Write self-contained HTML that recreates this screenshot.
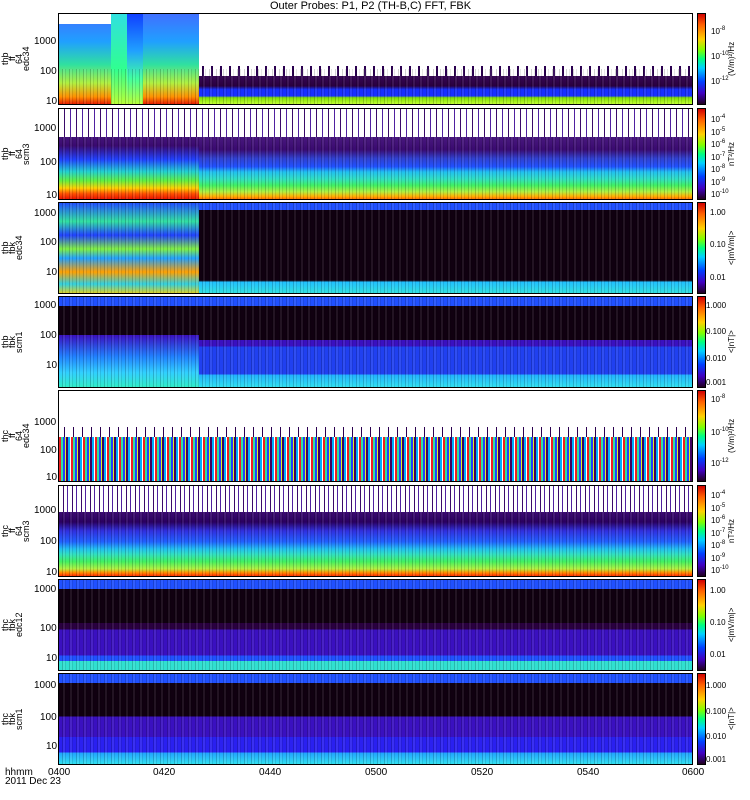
<!DOCTYPE html>
<html><head><style>
body{margin:0;width:750px;height:800px;background:#fff;position:relative;overflow:hidden;font-family:"Liberation Sans",sans-serif;}
.a{position:absolute}
.p{position:absolute;left:58px;width:635px;border:1px solid #000;box-sizing:border-box;overflow:hidden}
.cb{position:absolute;left:697px;width:9px;border:1px solid #000;box-sizing:border-box;background:linear-gradient(to bottom,#d00000,#ff6000 12%,#ffd000 28%,#80ff00 40%,#00ff80 50%,#00d0ff 60%,#0040ff 75%,#4000c0 88%,#200020)}
.t{position:absolute;font-size:10px;color:#000;line-height:10px;white-space:nowrap}
.c{position:absolute;font-size:8px;color:#000;line-height:8px;white-space:nowrap}
.c sup{font-size:6px;vertical-align:4px;line-height:0}
.yl{position:absolute;left:2px;width:26px;font-size:9px;line-height:7px;writing-mode:vertical-rl;transform:rotate(180deg);text-align:center;height:92px}
.u{position:absolute;left:727px;width:12px;font-size:8px;line-height:10px;writing-mode:vertical-rl;transform:rotate(180deg);text-align:center;height:92px;white-space:nowrap}
.st{position:absolute;left:0;right:0;bottom:0;background:repeating-linear-gradient(to right,rgba(0,0,0,0) 0 3px,rgba(0,0,0,.18) 3px 4px,rgba(255,255,255,.08) 4px 6px,rgba(0,0,0,.1) 6px 7px)}
</style></head><body>
<div class="t" style="left:270px;top:1px;font-size:11px">Outer Probes: P1, P2 (TH-B,C) FFT, FBK</div>

<!-- P1 -->
<div class="p" style="top:13px;height:92px;background:linear-gradient(to bottom,#fff 0 58%,#3a0a5a 66%,#2a0040 80%,#1830ff 84%,#1830ff 91%,#80e000 93%,#c0ff30 100%)">
<div class="a" style="left:0;top:0;width:140px;height:92px;background:linear-gradient(to bottom,#4070ff,#20a0ff 30%,#30e0a0 55%,#b0f040 75%,#ff9000 90%,#e00000)"></div>
<div class="a" style="left:52px;top:0;width:16px;height:92px;background:linear-gradient(to bottom,#30e0e0,#30ff90 60%,#c0ff30)"></div>
<div class="a" style="left:68px;top:0;width:16px;height:92px;background:linear-gradient(to bottom,#1040ff,#20a0ff 40%,#40ffa0 70%,#c0ff30)"></div>
<div class="a" style="left:0;top:0;width:52px;height:10px;background:#fff"></div>
<div class="a" style="left:140px;top:52px;width:494px;height:10px;background:repeating-linear-gradient(to right,#fff 0 3px,#2a0050 3px 5px,#fff 5px 9px)"></div>
<div class="st" style="top:55px"></div>
</div>
<div class="cb" style="top:13px;height:92px"></div>

<!-- P2 -->
<div class="p" style="top:108px;height:92px;background:linear-gradient(to bottom,#fff 0,#f0e8f8 20%,#4a1a80 30%,#3a0a70 45%,#3040d0 55%,#2050ff 64%,#20c0f0 70%,#30e0c0 78%,#40f060 85%,#b0f040 92%,#ffb000 97%,#ff7000)">
<div class="a" style="left:0;top:0;width:140px;height:92px;background:linear-gradient(to bottom,#fff 0,#4a1a80 25%,#3a0a70 40%,#2040ff 55%,#20d0d0 68%,#60f040 78%,#ffd000 86%,#ff5000 92%,#e00000)"></div>
<div class="a" style="left:0;top:0;width:634px;height:28px;background:repeating-linear-gradient(to right,#fff 0 5px,#3a0a6a 5px 6px,#fff 6px 11px,#5020a0 11px 12px)"></div>
<div class="st" style="top:28px"></div>
</div>
<div class="cb" style="top:108px;height:92px"></div>

<!-- P3 -->
<div class="p" style="top:202px;height:92px;background:linear-gradient(to bottom,#2050ff 0 8%,#100010 8%,#100010 86%,#20c0ff 88%,#30e0e0)">
<div class="a" style="left:0;top:0;width:140px;height:92px;background:linear-gradient(to bottom,#2050ff,#30e0a0 20%,#2040ff 35%,#80f040 50%,#20a0ff 60%,#ffa000 75%,#30d0e0 88%,#ffd000)"></div>
<div class="st" style="top:0"></div>
</div>
<div class="cb" style="top:202px;height:92px"></div>

<!-- P4 -->
<div class="p" style="top:296px;height:92px;background:linear-gradient(to bottom,#2050ff 0 10%,#100010 10% 48%,#3a10c0 48% 55%,#2040f0 55% 86%,#20b0ff 86%,#30e0f0)">
<div class="a" style="left:0;top:38px;width:140px;height:54px;background:linear-gradient(to bottom,#3a10c0,#2080ff 40%,#30d0ff 70%,#30f0c0)"></div>
<div class="st" style="top:0"></div>
</div>
<div class="cb" style="top:296px;height:92px"></div>

<!-- P5 -->
<div class="p" style="top:390px;height:92px;background:#fff">
<div class="a" style="left:0;top:44px;width:634px;height:48px;background:repeating-linear-gradient(to right,#f02020 0 2px,#30e0a0 2px 4px,#2040ff 4px 6px,#e0f020 6px 7px,#400060 7px 9px,#00b0ff 9px 11px,#fff 11px 12px)"></div>
<div class="a" style="left:0;top:36px;width:634px;height:10px;background:repeating-linear-gradient(to right,#fff 0 5px,#2a0050 5px 6px,#fff 6px 9px)"></div>
</div>
<div class="cb" style="top:390px;height:92px"></div>

<!-- P6 -->
<div class="p" style="top:485px;height:92px;background:linear-gradient(to bottom,#fff 0,#5030a0 20%,#3a0a70 30%,#2a0060 40%,#3030e0 50%,#2060ff 62%,#20c0f0 70%,#30e0c0 76%,#40f060 84%,#b0f040 92%,#ff9000 96%,#ff3000)">
<div class="a" style="left:0;top:0;width:634px;height:26px;background:repeating-linear-gradient(to right,#fff 0 4px,#3a0a6a 4px 5px,#fff 5px 8px,#5020a0 8px 9px)"></div>
<div class="st" style="top:26px"></div>
</div>
<div class="cb" style="top:485px;height:92px"></div>

<!-- P7 -->
<div class="p" style="top:579px;height:92px;background:linear-gradient(to bottom,#2050ff 0 10%,#100010 10% 48%,#2a0040 48% 55%,#3a10c0 55% 84%,#2050ff 84% 90%,#30e0d0 90%)">
<div class="st" style="top:0"></div>
</div>
<div class="cb" style="top:579px;height:92px"></div>

<!-- P8 -->
<div class="p" style="top:673px;height:92px;background:linear-gradient(to bottom,#2050ff 0 10%,#100010 10% 47%,#3a10c0 47% 70%,#2a20f0 70% 87%,#20a0ff 87%,#30e0f0)">
<div class="st" style="top:0"></div>
</div>
<div class="cb" style="top:673px;height:92px"></div>

<!-- y labels -->
<div class="yl" style="top:13px">thb<br>ff<br>64<br>edc34</div>
<div class="yl" style="top:108px">thb<br>ff<br>64<br>scm3</div>
<div class="yl" style="top:202px">thb<br>fbk<br>edc34</div>
<div class="yl" style="top:296px">thb<br>fbk<br>scm1</div>
<div class="yl" style="top:390px">thc<br>ff<br>64<br>edc34</div>
<div class="yl" style="top:485px">thc<br>ff<br>64<br>scm3</div>
<div class="yl" style="top:579px">thc<br>fbk<br>edc12</div>
<div class="yl" style="top:673px">thc<br>fbk<br>scm1</div>

<!-- y ticks -->
<div class="t" style="left:34px;top:37px">1000</div><div class="t" style="left:40px;top:67px">100</div><div class="t" style="left:46px;top:97px">10</div>
<div class="t" style="left:34px;top:124px">1000</div><div class="t" style="left:40px;top:158px">100</div><div class="t" style="left:46px;top:191px">10</div>
<div class="t" style="left:34px;top:209px">1000</div><div class="t" style="left:40px;top:238px">100</div><div class="t" style="left:46px;top:268px">10</div>
<div class="t" style="left:34px;top:301px">1000</div><div class="t" style="left:40px;top:331px">100</div><div class="t" style="left:46px;top:361px">10</div>
<div class="t" style="left:34px;top:418px">1000</div><div class="t" style="left:40px;top:446px">100</div><div class="t" style="left:46px;top:473px">10</div>
<div class="t" style="left:34px;top:506px">1000</div><div class="t" style="left:40px;top:537px">100</div><div class="t" style="left:46px;top:568px">10</div>
<div class="t" style="left:34px;top:585px">1000</div><div class="t" style="left:40px;top:624px">100</div><div class="t" style="left:46px;top:654px">10</div>
<div class="t" style="left:34px;top:681px">1000</div><div class="t" style="left:40px;top:713px">100</div><div class="t" style="left:46px;top:742px">10</div>

<!-- colorbar labels -->
<div class="c" style="left:711px;top:28px">10<sup>-8</sup></div>
<div class="c" style="left:711px;top:53px">10<sup>-10</sup></div>
<div class="c" style="left:711px;top:78px">10<sup>-12</sup></div>
<div class="c" style="left:711px;top:114px;line-height:12.5px">10<sup>-4</sup><br>10<sup>-5</sup><br>10<sup>-6</sup><br>10<sup>-7</sup><br>10<sup>-8</sup><br>10<sup>-9</sup><br>10<sup>-10</sup></div>
<div class="c" style="left:710px;top:209px">1.00</div><div class="c" style="left:710px;top:241px">0.10</div><div class="c" style="left:710px;top:274px">0.01</div>
<div class="c" style="left:706px;top:302px">1.000</div><div class="c" style="left:706px;top:328px">0.100</div><div class="c" style="left:706px;top:355px">0.010</div><div class="c" style="left:706px;top:379px">0.001</div>
<div class="c" style="left:711px;top:396px">10<sup>-8</sup></div>
<div class="c" style="left:711px;top:429px">10<sup>-10</sup></div>
<div class="c" style="left:711px;top:460px">10<sup>-12</sup></div>
<div class="c" style="left:711px;top:490px;line-height:12.5px">10<sup>-4</sup><br>10<sup>-5</sup><br>10<sup>-6</sup><br>10<sup>-7</sup><br>10<sup>-8</sup><br>10<sup>-9</sup><br>10<sup>-10</sup></div>
<div class="c" style="left:710px;top:587px">1.00</div><div class="c" style="left:710px;top:619px">0.10</div><div class="c" style="left:710px;top:651px">0.01</div>
<div class="c" style="left:706px;top:682px">1.000</div><div class="c" style="left:706px;top:708px">0.100</div><div class="c" style="left:706px;top:733px">0.010</div><div class="c" style="left:706px;top:756px">0.001</div>

<!-- units -->
<div class="u" style="top:13px">(V/m)²/Hz</div>
<div class="u" style="top:108px">nT²/Hz</div>
<div class="u" style="top:202px">&lt;|mV/m|&gt;</div>
<div class="u" style="top:296px">&lt;|nT|&gt;</div>
<div class="u" style="top:390px">(V/m)²/Hz</div>
<div class="u" style="top:485px">nT²/Hz</div>
<div class="u" style="top:579px">&lt;|mV/m|&gt;</div>
<div class="u" style="top:673px">&lt;|nT|&gt;</div>

<!-- time axis -->
<div class="t" style="left:5px;top:768px">hhmm</div>
<div class="t" style="left:5px;top:777px">2011 Dec 23</div>
<div class="t" style="left:48px;top:768px">0400</div>
<div class="t" style="left:153px;top:768px">0420</div>
<div class="t" style="left:259px;top:768px">0440</div>
<div class="t" style="left:365px;top:768px">0500</div>
<div class="t" style="left:471px;top:768px">0520</div>
<div class="t" style="left:577px;top:768px">0540</div>
<div class="t" style="left:682px;top:768px">0600</div>
</body></html>
